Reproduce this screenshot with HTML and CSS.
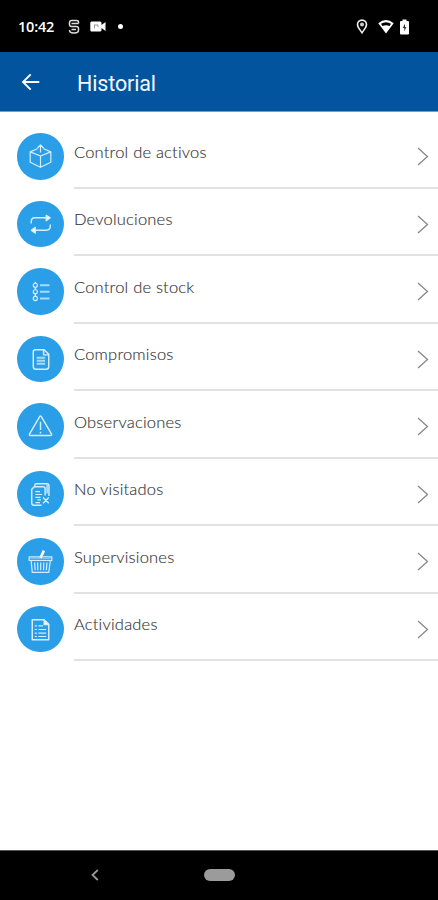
FILE: index.html
```html
<!DOCTYPE html>
<html lang="es">
<head>
<meta charset="utf-8">
<title>Historial</title>
<link rel="stylesheet" href="styles.css">
</head>
<body>
<div class="screen">
  <div class="status">
    <span class="clock">10:42</span>
    <svg class="s-app" width="12" height="16" viewBox="0 0 12 16"><path d="M10.500 4.500V3.200Q10.500 1.500 8.500 1.500H3.800Q1.500 1.500 1.500 3.700V5.500Q1.500 7.500 3.700 7.500H8.300Q10.500 7.500 10.500 9.500V11Q10.500 14 6.500 14H5.500Q1.500 14 1.500 11M3.500 4.500H10.500M3.500 10.500H8" fill="none" stroke="#ddd" stroke-width="1.500"/></svg>
    <svg class="s-video" width="16" height="11" viewBox="0 0 16 11"><path d="M1.500 .5H10Q11.500 .5 11.500 2V4L15.500 1V10L11.500 7V9Q11.500 10.500 10 10.500H1.500Q.3 10.500 .3 9V2Q.3 .5 1.500 .5Z" fill="#fff"/><path d="M4.500 3.500V7.500M4.500 4H8V6" fill="none" stroke="#999" stroke-width="1"/></svg>
    <i class="dot"></i>
    <span class="grow"></span>
    <svg class="s-pin" width="12" height="15" viewBox="0 0 12 15"><path d="M6 13.700C4 10.800 1.500 8.600 1.500 5.600A4.500 4.500 0 0 1 10.500 5.600C10.500 8.600 8 10.800 6 13.700Z" fill="none" stroke="#eee" stroke-width="1.600"/><circle cx="6" cy="5.600" r="2" fill="#ccc"/></svg>
    <svg class="s-wifi" width="16" height="15" viewBox="0 0 16 15"><path d="M.3 4.300Q8-2.300 15.700 4.300L8 14.500Z" fill="#fff"/><path d="M3 4.800Q8 1.500 13 4.800L11.600 6.900Q8 5.800 4.400 6.900Z" fill="#000"/></svg>
    <svg class="s-battery" width="9" height="16" viewBox="0 0 9 16"><path d="M2.500 2V.5H6.500V2H8Q9 2 9 3V14.500Q9 15.500 8 15.500H1Q0 15.500 0 14.500V3Q0 2 1 2Z" fill="#fff"/><path d="M5 4.500L2.800 9H4.300V12.500L6.400 8H5Z" fill="#333"/></svg>
  </div>
  <header class="bar">
    <svg class="back" width="20" height="18" viewBox="0 0 20 18"><path d="M18.300 9H2M9.700 1.300L2 9L9.700 16.700" fill="none" stroke="#fff" stroke-width="1.900"/></svg>
    <h1>Historial</h1>
  </header>
  <main class="list">
    <div class="row">
      <span class="icon"><svg viewBox="0 0 32 32"><path d="M13 8.500L6 11.500V21.500L16 26.500L26 21.500V11.500L19 8.500M6 11.500L16 15.500L26 11.500M16 15.500V26.500M16 12V5M12.900 8L16 4.700L19.100 8"/></svg></span>
      <div class="body"><span class="label">Control de activos</span><svg class="chev" width="12" height="19" viewBox="0 0 12 19"><path d="M1 1L10.500 9.500L1 18"/></svg></div>
    </div>
    <div class="row">
      <span class="icon"><svg viewBox="0 0 32 32"><path class="mid" d="M7 15V13.500Q7 9.500 10.500 9.500H23M25.500 16V17.500Q25.500 21.500 21.500 21.500H9"/><path class="solid" d="M21.500 7L25.500 9.500L21.500 12.500ZM11 18.700L7 21.500L11 24.500Z"/></svg></span>
      <div class="body"><span class="label">Devoluciones</span><svg class="chev" width="12" height="19" viewBox="0 0 12 19"><path d="M1 1L10.500 9.500L1 18"/></svg></div>
    </div>
    <div class="row">
      <span class="icon"><svg viewBox="0 0 32 32"><circle cx="11" cy="10" r="2"/><circle cx="11" cy="16.300" r="2"/><circle cx="11" cy="22.700" r="2"/><path class="mid" d="M11 6.500V8M11 12V14.300M11 18.300V20.700M11 24.700V25.500"/><path class="soft" d="M15.500 10H24.700M15.500 16.300H24.700M15.500 22.700H24.700"/></svg></span>
      <div class="body"><span class="label">Control de stock</span><svg class="chev" width="12" height="19" viewBox="0 0 12 19"><path d="M1 1L10.500 9.500L1 18"/></svg></div>
    </div>
    <div class="row">
      <span class="icon"><svg viewBox="0 0 32 32"><path class="mid" d="M11 6.500H19.500L24 11V22.800Q24 25.500 21.500 25.500H11.500Q9 25.500 9 22.800V8.800Q9 6.500 11 6.500ZM19 6.800V11.500H24"/><path class="soft" d="M12.300 14.300H20.500M12.300 17.200H20.500M12.300 20.100H20.500"/></svg></span>
      <div class="body"><span class="label">Compromisos</span><svg class="chev" width="12" height="19" viewBox="0 0 12 19"><path d="M1 1L10.500 9.500L1 18"/></svg></div>
    </div>
    <div class="row">
      <span class="icon"><svg viewBox="0 0 32 32"><path class="mid" d="M15.200 6.500Q16 5.200 16.800 6.500L26.700 23.300Q27.200 24.700 25.700 24.700H6.300Q4.800 24.700 5.300 23.300ZM16 11.500V19.500M16 21.200V22.700"/></svg></span>
      <div class="body"><span class="label">Observaciones</span><svg class="chev" width="12" height="19" viewBox="0 0 12 19"><path d="M1 1L10.500 9.500L1 18"/></svg></div>
    </div>
    <div class="row">
      <span class="icon"><svg viewBox="0 0 32 32"><path class="mid" d="M10.500 8V7Q10.500 5.500 12 5.500H22Q24.200 5.500 24.200 8V17.500M17 26.500H9.500Q7.500 26.500 7.500 24V11L10 8.500H18.500Q20.500 8.500 20.500 10.500V17M18.500 24.500L24 19M18.500 19L24 24.500"/><path class="soft" d="M22.500 6.500V15"/><path d="M11 13.300H15.500M11 16H17.500M11 18.700H16M13 21.300H16.500M11 23.800H15.500"/></svg></span>
      <div class="body"><span class="label">No visitados</span><svg class="chev" width="12" height="19" viewBox="0 0 12 19"><path d="M1 1L10.500 9.500L1 18"/></svg></div>
    </div>
    <div class="row">
      <span class="icon"><svg viewBox="0 0 32 32"><path class="heavy" d="M16 12.500L19.300 5.500"/><path d="M5 11.500H27V15H5ZM7 15.500L8 26.500H24L25.500 15.500M10.300 17L10.800 24.500M13.200 17L13.400 24.500M16.200 17V24.500M19.200 17L19 24.500M22.200 17L21.700 24.500"/><path d="M6 13.300H26" opacity=".5"/></svg></span>
      <div class="body"><span class="label">Supervisiones</span><svg class="chev" width="12" height="19" viewBox="0 0 12 19"><path d="M1 1L10.500 9.500L1 18"/></svg></div>
    </div>
    <div class="row">
      <span class="icon"><svg viewBox="0 0 32 32"><path class="mid" d="M8 6.500H19.500L24 11V26H8Z"/><path class="solid" d="M19.500 6.800L24 11.300H19.500Z"/><path d="M10.500 12.500H12.500M14 12.500H18.500M10.500 16H12.500M14 16H21.500M10.500 19.500H12.500M14 19.500H21.500M10.500 22.800H12.500M14 22.800H21.500"/></svg></span>
      <div class="body"><span class="label">Actividades</span><svg class="chev" width="12" height="19" viewBox="0 0 12 19"><path d="M1 1L10.500 9.500L1 18"/></svg></div>
    </div>
  </main>
  <nav class="nav">
    <svg class="nav-back" width="8" height="12" viewBox="0 0 8 12"><path d="M6.800 1L1.500 6L6.800 11" fill="none" stroke="#999" stroke-width="1.800"/></svg>
    <i class="pill"></i>
  </nav>
</div>
</body>
</html>
```

FILE: styles.css
```css
body { margin: 0; background: #fff; }
.screen { width: 438px; height: 900px; display: flex; flex-direction: column; overflow: hidden; }
.status { box-sizing: border-box; height: 52px; flex: none; background: #000; display: flex; align-items: center; padding: 1px 29px 0 18px; }
.clock { width: 50px; font: 600 14.500px/20px "Open Sans", sans-serif; letter-spacing: -.2px; color: #fff; }
.s-video { margin-left: 10px; }
.dot { width: 5px; height: 5px; margin-left: 12px; border-radius: 50%; background: #fff; }
.grow { flex: 1; }
.s-wifi { margin-left: 10px; }
.s-battery { margin-left: 6px; }
.bar { box-sizing: border-box; height: 60px; flex: none; background: #01549d; border-bottom: 1px solid #8798c3; display: flex; align-items: center; padding: 1px 0 0 21px; }
.bar h1 { margin: 3px 0 0 36px; font: 400 21.500px/28px Roboto, sans-serif; letter-spacing: -.15px; color: #f4f6ff; }
.list { flex: 1; padding-top: 9.200px; }
.row { height: 67.500px; display: flex; padding-left: 17px; }
.icon { width: 46.500px; height: 46.500px; margin-top: 12.300px; border-radius: 50%; background: #2b9ee8; display: flex; align-items: center; justify-content: center; flex: none; }
.icon svg { width: 33px; height: 33px; fill: none; stroke: #d5eefe; stroke-width: 1.150; stroke-linejoin: round; }
.icon .solid { fill: #fff; }
.icon .soft { stroke-width: 1.900; stroke: #a9d9fa; }
.icon .mid { stroke-width: 1.400; }
.icon .heavy { stroke-width: 2.500; stroke: #fff; }
.body { box-sizing: border-box; flex: 1; margin-left: 10.500px; border-bottom: 2px solid #e2e2e2; display: flex; align-items: flex-start; justify-content: space-between; padding-right: 9px; }
.label { margin-top: 19.800px; font: 300 16.500px/22px Lato, "Open Sans", sans-serif; letter-spacing: .2px; color: #333; -webkit-text-stroke: .15px #444; font-variant-ligatures: none; white-space: nowrap; }
.chev { margin-top: 26px; fill: none; stroke: #888; stroke-width: 1.300; }
.nav { box-sizing: border-box; height: 50px; flex: none; background: #000; border-top: 1px solid #555; display: flex; align-items: center; padding-left: 91px; }
.nav-back, .pill { margin-top: -2px; }
.pill { width: 31px; height: 12px; margin-left: 105px; border-radius: 6px; background: #9b9b9b; }
```
